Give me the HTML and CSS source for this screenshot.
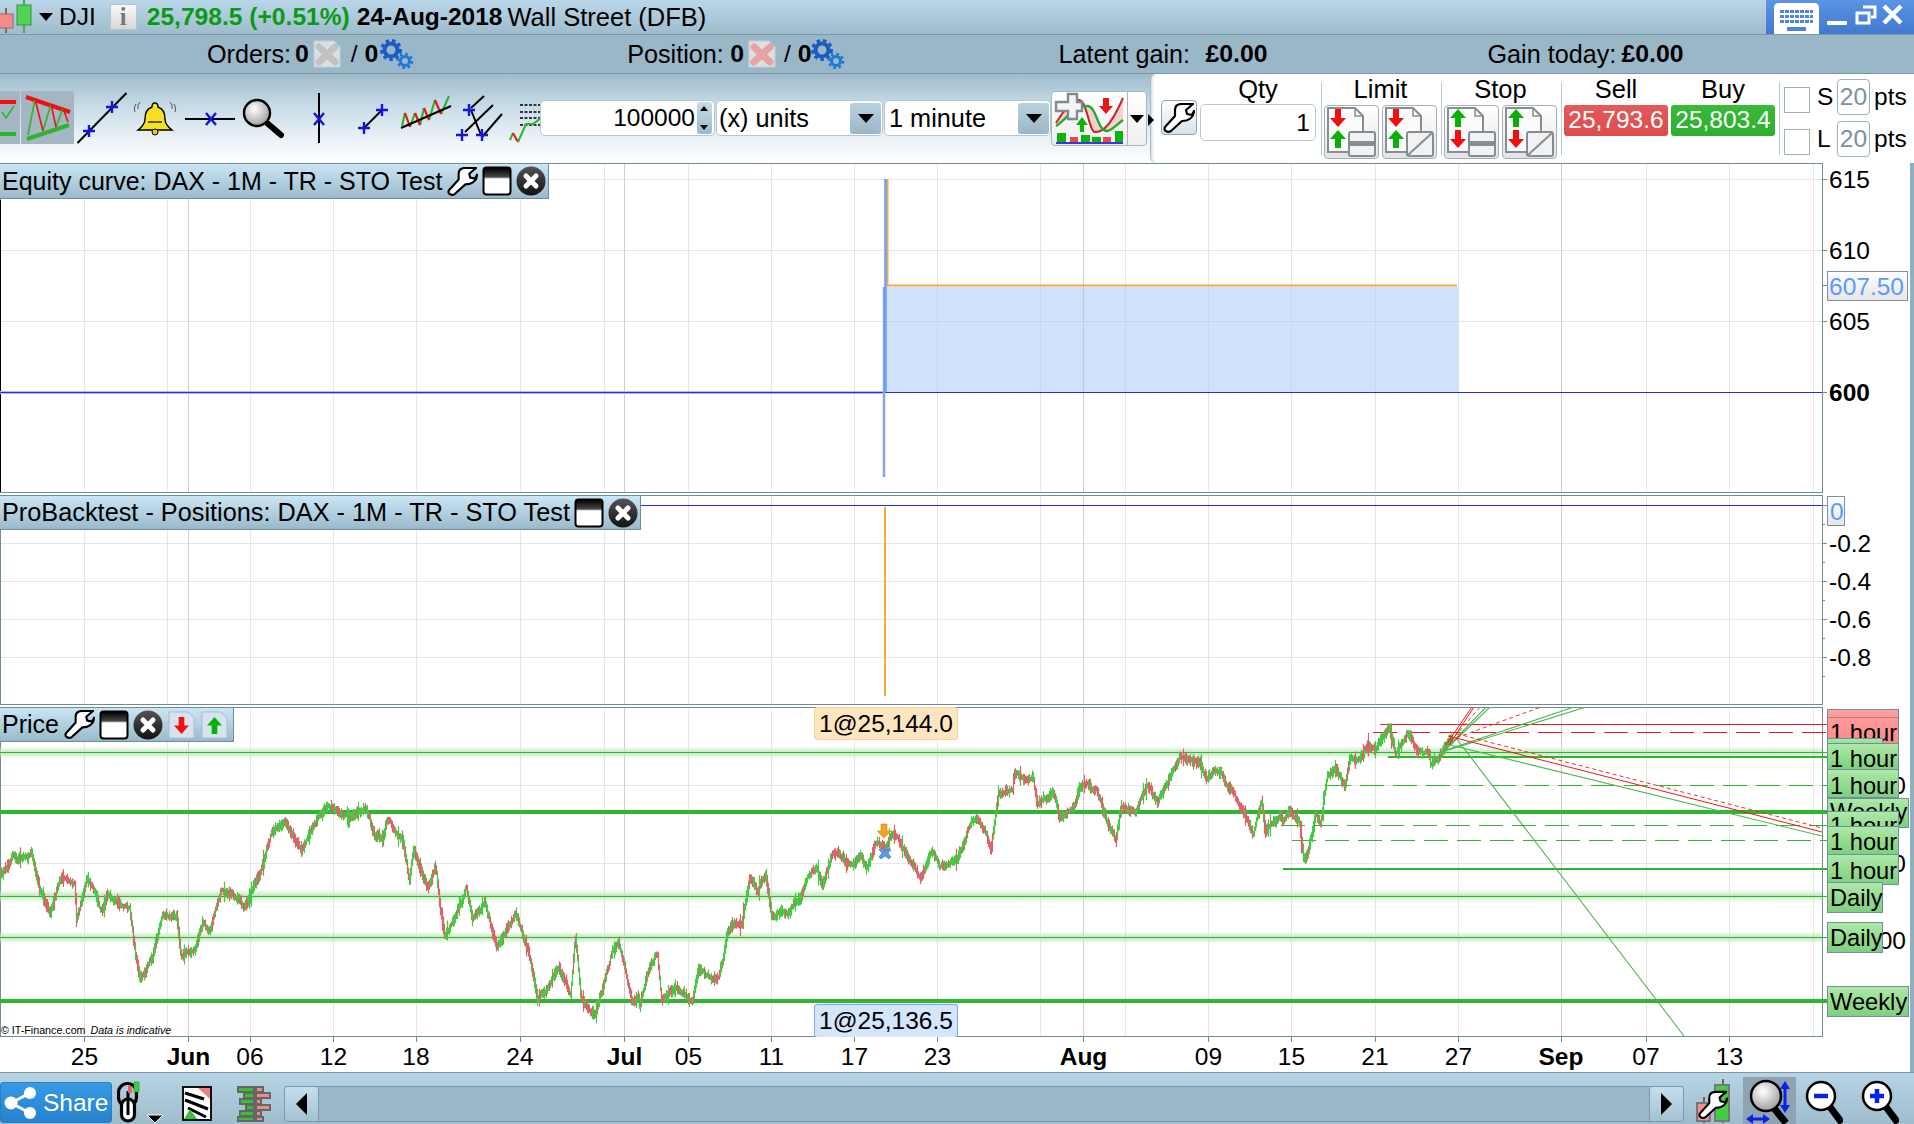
FILE: index.html
```html
<!DOCTYPE html>
<html lang="en">
<head>
<meta charset="utf-8">
<title>ProRealTime - DJI</title>
<link rel="stylesheet" href="styles.css">
</head>
<body>
<svg class="defs" width="0" height="0" aria-hidden="true">
  <defs>
    <linearGradient id="winTop" x1="0" y1="0" x2="0" y2="1"><stop offset="0" stop-color="#000"/><stop offset="0.35" stop-color="#444"/><stop offset="0.42" stop-color="#fff"/></linearGradient>
    <radialGradient id="glass" cx="0.4" cy="0.35" r="0.7"><stop offset="0" stop-color="#fff"/><stop offset="1" stop-color="#999"/></radialGradient>
    <linearGradient id="closeGrad" x1="0" y1="0" x2="0" y2="1"><stop offset="0" stop-color="#555"/><stop offset="1" stop-color="#111"/></linearGradient>
    <linearGradient id="tagGreen" x1="0" y1="0" x2="0" y2="1"><stop offset="0" stop-color="#aee9a8"/><stop offset="1" stop-color="#7dcf7d"/></linearGradient>
    <linearGradient id="tagRed" x1="0" y1="0" x2="0" y2="1"><stop offset="0" stop-color="#ffa0a0"/><stop offset="1" stop-color="#fb8a8a"/></linearGradient>
    <linearGradient id="tagGrey" x1="0" y1="0" x2="0" y2="1"><stop offset="0" stop-color="#fff"/><stop offset="1" stop-color="#e6e6e6"/></linearGradient>
    <linearGradient id="glow" x1="0" y1="0" x2="0" y2="1"><stop offset="0" stop-color="#cfeccb" stop-opacity="0"/><stop offset="0.5" stop-color="#bfe6ba"/><stop offset="1" stop-color="#cfeccb" stop-opacity="0"/></linearGradient>
    <symbol id="wrench" viewBox="0 0 32 30"><path d="M2 24 L12 13 L12 7 C12 3 15 1 19 1 L30 1 L23 7 L24 11 L29 12 L31 8 C31 14 26 18 19 18 L8 28 C5 30 0 28 2 24 Z" fill="#fff" stroke="#000" stroke-width="2.2" stroke-linejoin="round"/></symbol>
    <symbol id="window" viewBox="0 0 30 30"><rect x="1.5" y="1.5" width="27" height="27" rx="3" fill="url(#winTop)" stroke="#000" stroke-width="2"/></symbol>
    <symbol id="close" viewBox="0 0 30 30"><circle cx="15" cy="15" r="14.5" fill="url(#closeGrad)"/><path d="M10 10 L20 20 M20 10 L10 20" stroke="#fff" stroke-width="5" stroke-linecap="round"/></symbol>
    <symbol id="gears" viewBox="0 0 34 30"><g fill="none" stroke="#1a5cc4"><circle cx="11" cy="11" r="6.5" stroke-width="4"/><circle cx="11" cy="11" r="9.5" stroke-width="3" stroke-dasharray="3.5 3"/><circle cx="25" cy="22" r="4.5" stroke-width="3" stroke="#1f78d8"/><circle cx="25" cy="22" r="7" stroke-width="2.5" stroke-dasharray="2.8 2.7" stroke="#1f78d8"/></g></symbol>
    <symbol id="xdoc" viewBox="0 0 28 28"><path d="M1 1 H21 L27 7 V27 H1 Z" fill="#d9e0e4" stroke="#c4ced4"/><path d="M6 7 L22 22 M22 7 L6 22" stroke="currentColor" stroke-width="7" stroke-linecap="round"/></symbol>
    <symbol id="arrowDown" viewBox="0 0 16 18"><path d="M5 0 H11 V9 H16 L8 18 L0 9 H5 Z" fill="#f01010"/></symbol>
    <symbol id="arrowUp" viewBox="0 0 16 18"><path d="M8 0 L16 9 H11 V18 H5 V9 H0 Z" fill="#08b008"/></symbol>
    <symbol id="docBase" viewBox="0 0 55 54"><path d="M4 3 H31 L39 11 V47 H4 Z" fill="#fbfbfb" stroke="#868e93" stroke-width="2"/><path d="M31 3 V11 H39" fill="none" stroke="#868e93" stroke-width="1.5"/></symbol>
    <symbol id="blockBar" viewBox="0 0 55 54"><rect x="25" y="27" width="26" height="24" rx="2" fill="#f2f2f2" stroke="#868e93" stroke-width="2"/><rect x="25" y="36" width="26" height="5" fill="#868e93"/></symbol>
    <symbol id="blockDiag" viewBox="0 0 55 54"><rect x="25" y="27" width="26" height="24" rx="2" fill="#f2f2f2" stroke="#868e93" stroke-width="2"/><path d="M26 50 L50 28" stroke="#868e93" stroke-width="2"/></symbol>
    <symbol id="plusMark" viewBox="-7 -7 14 14"><path d="M-6 0H6M0 -6V6" stroke="#1414e0" stroke-width="2.4"/></symbol>
    <symbol id="crossMark" viewBox="-7 -7 14 14"><path d="M-5 -6L5 6M5 -6L-5 6" stroke="#1414e0" stroke-width="2.4"/></symbol>
  </defs>
</svg>

<div class="app">
  <header class="title-bar">
    <svg class="candle-icon" viewBox="0 0 32 34" width="32" height="34">
      <path d="M24 0V33" stroke="#55a555" stroke-width="2"/>
      <path d="M6 8V33" stroke="#a85a5a" stroke-width="2"/>
      <rect x="-1" y="14" width="14" height="14" fill="#f58b8b" stroke="#8a6a6a"/>
      <rect x="17" y="5" width="14" height="20" fill="#52d252" stroke="#3f8f3f"/>
    </svg>
    <svg class="caret-down" viewBox="0 0 14 8" width="14" height="8"><path d="M0 0H14L7 8Z" fill="#000"/></svg>
    <span class="instrument">DJI</span>
    <span class="info-btn">i</span>
    <span class="last-price">25,798.5 (+0.51%)</span>
    <span class="quote-date">24-Aug-2018</span>
    <span class="market">Wall Street (DFB)</span>
    <div class="win-controls">
      <svg class="kbd" viewBox="0 0 45 31" width="45" height="31">
        <path d="M5 0H40Q45 0 45 5V31H0V5Q0 0 5 0Z" fill="#fff"/>
        <g fill="#4d86d8"><rect x="6" y="7" width="33" height="3"/><rect x="6" y="12" width="33" height="3"/><rect x="6" y="17" width="33" height="3"/><rect x="13" y="24" width="19" height="4"/></g>
        <g fill="#fff"><rect x="10" y="6" width="1" height="15"/><rect x="15" y="6" width="1" height="15"/><rect x="20" y="6" width="1" height="15"/><rect x="25" y="6" width="1" height="15"/><rect x="30" y="6" width="1" height="15"/><rect x="35" y="6" width="1" height="15"/></g>
      </svg>
      <svg class="win-glyphs" viewBox="0 0 80 34" width="80" height="34">
        <rect x="0" y="21" width="20" height="4" rx="1" fill="#fff"/>
        <path d="M33 13H42V23H30V13Z" fill="none" stroke="#fff" stroke-width="3"/>
        <path d="M36 7H48V17H44" fill="none" stroke="#fff" stroke-width="3"/>
        <path d="M57 6L74 23M74 6L57 23" stroke="#fff" stroke-width="4.5"/>
      </svg>
    </div>
  </header>

  <div class="status-bar">
    <div class="stat stat-orders"><span class="lbl lbl-orders">Orders:</span><b>0</b><svg class="xdoc-icon xdoc-grey"><use href="#xdoc"/></svg><span class="slash">/ <b>0</b></span><svg class="gear-icon"><use href="#gears"/></svg></div>
    <div class="stat stat-position"><span class="lbl lbl-position">Position:</span><b>0</b><svg class="xdoc-icon xdoc-red"><use href="#xdoc"/></svg><span class="slash slash-tight">/ <b>0</b></span><svg class="gear-icon gear-tight"><use href="#gears"/></svg></div>
    <div class="stat stat-latent"><span class="lbl lbl-latent">Latent gain:</span><b>£0.00</b></div>
    <div class="stat stat-today"><span class="lbl lbl-today">Gain today:</span><b>£0.00</b></div>
  </div>

  <div class="toolbar">
    <svg class="tools" viewBox="0 74 541 89" width="541" height="89">
      <rect x="0" y="91" width="20" height="53" fill="#a3b6c2"/>
      <rect x="21" y="91" width="53" height="53" fill="#a3b6c2"/>
      <path d="M0 102H16" stroke="#f01010" stroke-width="4"/><path d="M0 134H16" stroke="#2eb52e" stroke-width="4"/>
      <path d="M2 112L6 118L14 106" fill="none" stroke="#2eb52e" stroke-width="1.5"/>
      <path d="M26 97L70 112" stroke="#f01010" stroke-width="4"/><path d="M27 139L69 125" stroke="#2eb52e" stroke-width="4"/>
      <path d="M28 135L35 99M43 131L51 104M56 127L63 108" stroke="#2eb52e" stroke-width="1.6"/>
      <path d="M35 99L43 131M51 104L56 127M63 108L68 122" stroke="#f01010" stroke-width="1.6"/>
      <path d="M77.5 143L126.5 93" stroke="#000" stroke-width="2"/>
      <use href="#plusMark" x="82" y="124" width="14" height="14"/><use href="#plusMark" x="105" y="100" width="14" height="14"/>
      <path d="M155 103c-2 0-3 2-3 4c-6 2-7 8-7 12c0 5-3 8-7 11h34c-4-3-7-6-7-11c0-4-1-10-7-12c0-2-1-4-3-4z" fill="#f6e020" stroke="#000" stroke-width="1.4"/>
      <circle cx="155" cy="132" r="3" fill="#e8c810" stroke="#000"/><path d="M148 122H162" stroke="#000" stroke-width="1.2"/>
      <path d="M136 104q-3 4-1 8M140 102q-3 3-2 7M174 104q3 4 1 8M170 102q3 3 2 7" fill="none" stroke="#555" stroke-width="1"/>
      <path d="M185 119H235" stroke="#000" stroke-width="2"/><use href="#crossMark" x="204" y="112" width="14" height="14"/>
      <path d="M267 123L281 135" stroke="#000" stroke-width="6" stroke-linecap="round"/>
      <circle cx="257" cy="113" r="13" fill="url(#glass)" stroke="#000" stroke-width="2.4"/>
      <path d="M319 93V143" stroke="#000" stroke-width="2"/><use href="#crossMark" x="312" y="112" width="14" height="14"/>
      <path d="M364 128L382 110" stroke="#000" stroke-width="2"/>
      <use href="#plusMark" x="357" y="121" width="14" height="14"/><use href="#plusMark" x="375" y="103" width="14" height="14"/>
      <path d="M402 126L405 113M410 127L415 113M420 125L424 108M429 120L435 100M441 114L449 96" stroke="#2eb52e" stroke-width="2.2"/>
      <path d="M405 113L410 127M415 113L420 125M424 108L429 120M435 100L441 114" stroke="#f01010" stroke-width="2.2"/>
      <path d="M401 128L451 106" stroke="#000" stroke-width="2"/>
      <path d="M471 108L484 96M465 132L493 105M482 137L502 114M471 110L481 135" stroke="#000" stroke-width="2"/>
      <use href="#plusMark" x="462" y="103" width="14" height="14"/><use href="#plusMark" x="455" y="128" width="14" height="14"/><use href="#plusMark" x="475" y="128" width="14" height="14"/>
      <path d="M520 105H541M520 112H541M520 118H541M520 125H541" stroke="#000" stroke-width="1.6" stroke-dasharray="3 1.5"/>
      <path d="M510 140L513 133" stroke="#2eb52e" stroke-width="2"/><path d="M513 133L518 142" stroke="#f01010" stroke-width="2"/><path d="M518 142L526 124L533 124L541 118" fill="none" stroke="#2eb52e" stroke-width="2"/>
    </svg>
    <div class="num-input"><span class="num-value">100000</span><span class="spinner"><svg viewBox="0 0 14 32" width="14" height="32"><path d="M3 9H11L7 4ZM3 23H11L7 28Z" fill="#000"/></svg></span></div>
    <div class="select select-units"><span class="select-text">(x) units</span><span class="select-arrow"><svg viewBox="0 0 16 9" width="16" height="9"><path d="M0 0H16L8 9Z" fill="#000"/></svg></span></div>
    <div class="select select-period"><span class="select-text">1 minute</span><span class="select-arrow"><svg viewBox="0 0 16 9" width="16" height="9"><path d="M0 0H16L8 9Z" fill="#000"/></svg></span></div>
    <div class="indicator-btn">
      <svg viewBox="0 0 74 55" width="74" height="55">
        <path d="M3 31C10 20 18 8 26 8C34 8 36 40 42 40C48 40 56 38 70 6V28C62 34 58 39 54 39C44 39 44 14 34 14C22 14 12 28 3 34Z" fill="#f7cfcf"/>
        <path d="M3 31C10 20 18 8 26 8C34 8 36 40 42 40C48 40 56 38 70 6" fill="none" stroke="#c02828" stroke-width="2"/>
        <path d="M3 34C12 28 22 14 34 14C44 14 44 39 54 39C58 39 62 34 70 28" fill="none" stroke="#1fae2a" stroke-width="2.4"/>
        <path d="M10 10H15V2H24V10H29V19H24V27H15V19H3V10Z" fill="#f4f4f4" stroke="#808a90" stroke-width="2.4"/>
        <path d="M29 25L35 33H31V40H27V33H23Z" fill="#0cb30c"/>
        <path d="M50 6H56V14H60L53 22L46 14H50Z" fill="#ee1414"/>
        <g fill="#0cb30c"><rect x="4" y="41" width="9" height="9"/><rect x="28" y="43" width="9" height="7"/><rect x="39" y="45" width="9" height="5"/><rect x="62" y="39" width="8" height="11"/></g>
        <g fill="#e84a4a"><rect x="17" y="45" width="8" height="5"/><rect x="50" y="45" width="8" height="5"/></g>
        <rect x="3" y="50" width="67" height="2" fill="#3838e0"/>
      </svg>
      <span class="indicator-caret"><svg viewBox="0 0 14 8" width="14" height="8"><path d="M0 0H14L7 8Z" fill="#000"/></svg></span>
    </div>
    <svg class="panel-toggle" viewBox="0 0 6 12" width="6" height="12"><path d="M0 0L6 6L0 12Z" fill="#000"/></svg>
    <div class="trade-panel">
      <button class="icon-btn wrench-btn" type="button"><svg width="32" height="30"><use href="#wrench"/></svg></button>
      <div class="col col-qty"><div class="col-label">Qty</div><div class="qty-input">1</div></div>
      <div class="sep"></div>
      <div class="col col-orders">
        <div class="col-label">Limit</div>
        <div class="btn-pair">
          <button class="order-btn" type="button"><svg viewBox="0 0 55 54" width="55" height="54"><use href="#docBase"/><use href="#blockBar"/><use href="#arrowDown" x="6" y="4" width="16" height="18"/><use href="#arrowUp" x="6" y="25" width="16" height="18"/></svg></button>
          <button class="order-btn" type="button"><svg viewBox="0 0 55 54" width="55" height="54"><use href="#docBase"/><use href="#blockDiag"/><use href="#arrowDown" x="6" y="4" width="16" height="18"/><use href="#arrowUp" x="6" y="25" width="16" height="18"/></svg></button>
        </div>
      </div>
      <div class="sep"></div>
      <div class="col col-orders">
        <div class="col-label">Stop</div>
        <div class="btn-pair">
          <button class="order-btn" type="button"><svg viewBox="0 0 55 54" width="55" height="54"><use href="#docBase"/><use href="#blockBar"/><use href="#arrowUp" x="6" y="4" width="16" height="18"/><use href="#arrowDown" x="6" y="25" width="16" height="18"/></svg></button>
          <button class="order-btn" type="button"><svg viewBox="0 0 55 54" width="55" height="54"><use href="#docBase"/><use href="#blockDiag"/><use href="#arrowUp" x="6" y="4" width="16" height="18"/><use href="#arrowDown" x="6" y="25" width="16" height="18"/></svg></button>
        </div>
      </div>
      <div class="sep"></div>
      <div class="col col-price"><div class="col-label">Sell</div><div class="price-box price-sell">25,793.6</div></div>
      <div class="col col-price col-buy"><div class="col-label">Buy</div><div class="price-box price-buy">25,803.4</div></div>
      <div class="sep sep-last"></div>
      <div class="risk">
        <div class="risk-row"><span class="check"></span><span class="risk-key">S</span><span class="pts-box">20</span><span class="pts">pts</span></div>
        <div class="risk-row"><span class="check"></span><span class="risk-key">L</span><span class="pts-box">20</span><span class="pts">pts</span></div>
      </div>
    </div>
  </div>

  <main class="charts">
    <section class="panel panel-equity">
      <svg class="plot" viewBox="0 163 1910 330" width="1910" height="330">
        <rect class="plot-frame" x="0.5" y="163.5" width="1822" height="329"/>
        <g id="grid-equity"></g>
        <path class="frame-left" d="M0.5 200V492"/>
        <rect class="equity-fill" x="884.5" y="287" width="574" height="105"/>
        <path class="base-soft" d="M0 392.5H884"/>
        <path class="base-line" d="M0 392.5H1822"/>
        <path class="equity-line" d="M887.5 179V285.5H1457"/>
        <path class="spike-soft" d="M884 287V477"/>
        <path class="spike" d="M885.5 179V392"/>
        <path class="spike-orange" d="M884 392V470"/>
        <path class="tick" d="M1822 179.5H1827M1822 250.5H1827M1822 285.5H1827M1822 321.5H1827M1822 392.5H1827"/>
        <text class="ax" x="1829" y="188">615</text>
        <text class="ax" x="1829" y="259">610</text>
        <rect class="value-tag" x="1827.5" y="271.5" width="80" height="29"/>
        <text class="ax ax-blue" x="1829" y="294.5">607.50</text>
        <text class="ax" x="1829" y="330">605</text>
        <text class="ax ax-bold" x="1829" y="401">600</text>
      </svg>
      <div class="legend legend-equity">
        <span class="legend-title">Equity curve: DAX - 1M - TR - STO Test</span>
        <svg class="lg-wrench"><use href="#wrench"/></svg>
        <svg class="lg-btn"><use href="#window"/></svg>
        <svg class="lg-btn"><use href="#close"/></svg>
      </div>
    </section>

    <section class="panel panel-positions">
      <svg class="plot" viewBox="0 495 1910 210" width="1910" height="210">
        <rect class="plot-frame" x="0.5" y="495.5" width="1822" height="209"/>
        <g id="grid-positions"></g>
        <path class="base-line" d="M640 505.5H1822"/>
        <path class="position-line" d="M885 507V696"/>
        <path class="tick" d="M1822 505.5H1827M1822 543.5H1827M1822 581.5H1827M1822 619.5H1827M1822 657.5H1827M1822 524.5H1825M1822 562.5H1825M1822 600.5H1825M1822 638.5H1825M1822 676.5H1825"/>
        <rect class="value-tag" x="1827.5" y="496.5" width="17" height="29"/>
        <text class="ax ax-blue" x="1830" y="520">0</text>
        <text class="ax" x="1829" y="552">-0.2</text>
        <text class="ax" x="1829" y="590">-0.4</text>
        <text class="ax" x="1829" y="628">-0.6</text>
        <text class="ax" x="1829" y="666">-0.8</text>
      </svg>
      <div class="legend legend-positions">
        <span class="legend-title">ProBacktest - Positions: DAX - 1M - TR - STO Test</span>
        <svg class="lg-btn"><use href="#window"/></svg>
        <svg class="lg-btn"><use href="#close"/></svg>
      </div>
    </section>

    <section class="panel panel-price">
      <svg class="plot" viewBox="0 707 1910 330" width="1910" height="330">
        <rect class="plot-frame" x="0.5" y="707.5" width="1822" height="329"/>
        <g id="grid-price"></g>
        <text class="ax" x="1831" y="794">25,500</text>
        <text class="ax" x="1831" y="872">25,000</text>
        <text class="ax" x="1831" y="949">24,500</text>
        <g class="glows">
          <rect x="0" y="746" width="1822" height="13"/><rect x="0" y="889" width="1822" height="14"/><rect x="0" y="931" width="1822" height="13"/>
        </g>
        <path class="lv-thin" d="M0 752.5H1827M0 896.5H1827M0 937.5H1827"/>
        <path class="lv-thick" d="M0 812H1827M0 1001H1827"/>
        <path class="lv-mid" d="M1388 757H1827M1283 869H1827"/>
        <path class="lv-dash" d="M1327 785.5H1827M1281 825.5H1827M1292 840.5H1827"/>
        <path class="red-solid" d="M1380 724.5H1827"/>
        <path class="red-dash" d="M1373 732.5H1827"/>
        <path id="candles-red" class="candle-red"/>
        <path id="candles-green" class="candle-green"/>
        <path class="trend-g" d="M1456 738L1684 1036M1450 745L1822 836M1442 752L1586 707M1446 750L1574 707M1440 755L1490 707M1438 757L1486 707"/>
        <path class="trend-r" d="M1448 736L1822 832M1446 745L1472 707M1449 745L1474 707"/>
        <path class="trend-rd" d="M1450 732L1822 828M1450 740L1541 707M1450 742L1480 707"/>
        <path class="entry-arrow" d="M881 824H887V831H891L884 838L877 831H881Z"/>
        <path class="exit-x" d="M881 848L885 851L889 848L891 850L888 853L891 857L889 859L885 856L881 859L879 857L882 853L879 850Z"/>
        <g class="tags">
          <g class="tag tag-red"><rect x="1827.5" y="709.5" width="71" height="34"/><path d="M1828 717.5H1898"/><text x="1830" y="741">1 hour</text></g>
          <g class="tag"><rect x="1827.5" y="738.5" width="55" height="10"/></g>
          <g class="tag"><rect x="1827.5" y="743.5" width="71" height="26"/><text x="1830" y="767">1 hour</text></g>
          <g class="tag"><rect x="1827.5" y="769.5" width="71" height="28"/><text x="1830" y="794">1 hour</text></g>
          <g class="tag"><rect x="1827.5" y="798.5" width="81" height="29"/><text x="1830" y="820">Weekly</text></g>
          <g class="tag"><rect x="1827.5" y="811.5" width="71" height="29"/><text x="1830" y="834">1 hour</text></g>
          <g class="tag"><rect x="1827.5" y="826.5" width="71" height="28"/><text x="1830" y="850">1 hour</text></g>
          <g class="tag"><rect x="1827.5" y="854.5" width="71" height="30"/><text x="1830" y="879">1 hour</text></g>
          <g class="tag"><rect x="1827.5" y="882.5" width="55" height="30"/><text x="1830" y="906">Daily</text></g>
          <g class="tag"><rect x="1827.5" y="922.5" width="55" height="30"/><text x="1830" y="946">Daily</text></g>
          <g class="tag"><rect x="1827.5" y="986.5" width="81" height="30"/><text x="1830" y="1010">Weekly</text></g>
        </g>
      </svg>
      <div class="legend legend-price">
        <span class="legend-title">Price</span>
        <svg class="lg-wrench"><use href="#wrench"/></svg>
        <svg class="lg-btn"><use href="#window"/></svg>
        <svg class="lg-btn"><use href="#close"/></svg>
        <svg class="lg-doc" viewBox="0 0 29 30"><path d="M2 2H21L27 8V28H2Z" fill="#d6e4f0" stroke="#a9bdd0"/><use href="#arrowDown" x="7" y="7" width="15" height="17"/></svg>
        <svg class="lg-doc" viewBox="0 0 29 30"><path d="M2 2H21L27 8V28H2Z" fill="#d6e4f0" stroke="#a9bdd0"/><use href="#arrowUp" x="7" y="7" width="15" height="17"/></svg>
      </div>
      <div class="fill-tag fill-sell">1@25,144.0</div>
      <div class="fill-tag fill-buy">1@25,136.5</div>
      <div class="copyright">© IT-Finance.com <em>Data is indicative</em></div>
    </section>

    <svg class="x-axis" viewBox="0 1037 1910 36" width="1910" height="36">
      <path id="x-ticks" class="tick-x"/>
      <g class="ax-x">
        <text x="84.5" y="1065">25</text><text class="ax-bold" x="188.5" y="1065">Jun</text><text x="250" y="1065">06</text><text x="333.5" y="1065">12</text><text x="416" y="1065">18</text><text x="520" y="1065">24</text><text class="ax-bold" x="624.5" y="1065">Jul</text><text x="688.5" y="1065">05</text><text x="771.5" y="1065">11</text><text x="854.5" y="1065">17</text><text x="937.5" y="1065">23</text><text class="ax-bold" x="1083.5" y="1065">Aug</text><text x="1208.5" y="1065">09</text><text x="1291.5" y="1065">15</text><text x="1375" y="1065">21</text><text x="1458.5" y="1065">27</text><text class="ax-bold" x="1561" y="1065">Sep</text><text x="1646" y="1065">07</text><text x="1729.5" y="1065">13</text>
      </g>
    </svg>
  </main>

  <footer class="bottom-bar">
    <button class="share-btn" type="button">
      <svg viewBox="0 0 34 34" width="34" height="34"><path d="M27 7L8 17L27 27" fill="none" stroke="#fff" stroke-width="3"/><circle cx="27" cy="7" r="6" fill="#fff"/><circle cx="8" cy="17" r="6.5" fill="#fff"/><circle cx="27" cy="27" r="6" fill="#fff"/></svg>
      <span>Share</span>
    </button>
    <svg class="chain-icon" viewBox="0 0 24 44" width="24" height="44">
      <rect x="1.5" y="4.5" width="18" height="23" rx="9" fill="none" stroke="#000" stroke-width="3.2"/>
      <rect x="4.5" y="20" width="13" height="22" rx="6.5" fill="#fff" stroke="#000" stroke-width="3.2"/>
      <path d="M11 12V36" stroke="#000" stroke-width="3"/>
      <rect x="11" y="7" width="4" height="7" fill="#e86060"/><rect x="17" y="3" width="5" height="10" fill="#3ccf3c" stroke="#1a8a1a" stroke-width="0.5"/>
    </svg>
    <svg class="chain-caret" viewBox="0 0 18 10" width="18" height="10"><path d="M1 1H17L9 9Z" fill="#000" stroke="#fff"/></svg>
    <svg class="news-icon" viewBox="0 0 30 35" width="30" height="35">
      <rect x="1" y="1" width="28" height="33" fill="#fff" stroke="#111" stroke-width="2"/>
      <path d="M3 7L22 13M3 14L26 23M6 22L24 31" stroke="#000" stroke-width="3"/>
      <path d="M16 2H28V13Z" fill="#f08080"/><path d="M2 33H15L8 23Z" fill="#3cc03c"/>
    </svg>
    <svg class="bars-icon" viewBox="0 0 35 36" width="35" height="36">
      <g stroke="#666" stroke-width="2">
        <rect x="2" y="1" width="16" height="5" fill="#35c035"/><rect x="20" y="1" width="7" height="5" fill="#f08a8a"/>
        <rect x="8" y="7" width="10" height="5" fill="#35c035"/><rect x="20" y="7" width="14" height="5" fill="#f08a8a"/>
        <rect x="4" y="13" width="14" height="5" fill="#35c035"/><rect x="20" y="13" width="5" height="5" fill="#f08a8a"/>
        <rect x="10" y="19" width="8" height="5" fill="#35c035"/><rect x="20" y="19" width="14" height="5" fill="#f08a8a"/>
        <rect x="4" y="25" width="14" height="5" fill="#35c035"/><rect x="20" y="25" width="5" height="5" fill="#f08a8a"/>
        <rect x="2" y="31" width="16" height="4" fill="#35c035"/><rect x="20" y="31" width="7" height="4" fill="#f08a8a"/>
      </g>
    </svg>
    <div class="scrollbar">
      <button class="scroll-btn" type="button"><svg viewBox="0 0 11 22" width="11" height="22"><path d="M11 0V22L0 11Z" fill="#000"/></svg></button>
      <div class="scroll-track"></div>
      <button class="scroll-btn" type="button"><svg viewBox="0 0 11 22" width="11" height="22"><path d="M0 0V22L11 11Z" fill="#000"/></svg></button>
    </div>
    <svg class="settings-icon" viewBox="0 0 34 44" width="34" height="44">
      <path d="M27 0V44M8 18V44" stroke="#666" stroke-width="2"/>
      <rect x="1" y="24" width="13" height="18" fill="#f28f8f" stroke="#777" stroke-width="2"/>
      <rect x="19" y="6" width="14" height="36" fill="#45cc45" stroke="#777" stroke-width="2"/>
      <use href="#wrench" x="2" y="10" width="30" height="32"/>
    </svg>
    <div class="zoom-selected">
      <svg viewBox="0 0 53 47" width="53" height="47">
        <path d="M30 30L43 46" stroke="#000" stroke-width="7"/>
        <circle cx="23" cy="19" r="15" fill="url(#glass)" stroke="#000" stroke-width="2.5"/>
        <path d="M42 10V30" stroke="#0a22e8" stroke-width="3"/><path d="M37 12L42 4L47 12ZM37 28L42 36L47 28Z" fill="#0a22e8"/>
        <path d="M8 42H22" stroke="#0a22e8" stroke-width="3"/><path d="M10 37L3 42L10 47ZM20 37L27 42L20 47Z" fill="#0a22e8"/>
      </svg>
    </div>
    <svg class="zoom-out" viewBox="0 0 38 47" width="38" height="47">
      <path d="M25 30L37 46" stroke="#000" stroke-width="7"/><circle cx="16" cy="19" r="14" fill="#fff" stroke="#000" stroke-width="2.5"/><path d="M9 19H23" stroke="#0a22e8" stroke-width="4.5"/>
    </svg>
    <svg class="zoom-in" viewBox="0 0 38 47" width="38" height="47">
      <path d="M25 30L37 46" stroke="#000" stroke-width="7"/><circle cx="16" cy="19" r="14" fill="#fff" stroke="#000" stroke-width="2.5"/><path d="M9 19H23M16 12V26" stroke="#0a22e8" stroke-width="4.5"/>
    </svg>
  </footer>
</div>
<script src="chart.js"></script>
</body>
</html>
```

FILE: styles.css
```css
* { box-sizing: border-box; }
html, body { margin: 0; padding: 0; background: #fff; }
body { font-family: "Liberation Sans", Arial, sans-serif; font-size: 24.5px; color: #000; overflow: hidden; }
.defs { position: absolute; }
svg { display: block; flex: none; }
button { font: inherit; padding: 0; margin: 0; }
.app { width: 1914px; height: 1124px; display: flex; flex-direction: column; overflow: hidden; }

/* title row */
.title-bar { height: 35px; flex: none; display: flex; align-items: center; background: linear-gradient(#bad7e9, #9fbccd); border-bottom: 1px solid #7d97a6; }
.caret-down { margin-left: 7px; }
.instrument { margin-left: 6px; }
.info-btn { margin-left: 14px; width: 27px; height: 26px; display: flex; align-items: center; justify-content: center; background: linear-gradient(#fafafa, #d6d6d6); border: 1px solid #b8c6ce; border-radius: 2px; font-family: "Liberation Serif", serif; font-weight: 700; color: #777; }
.last-price { margin-left: 10px; font-weight: 700; color: #0a9a14; font-size: 24.6px; }
.quote-date { margin-left: 7px; font-weight: 700; }
.market { margin-left: 5px; font-size: 25.5px; }
.win-controls { margin-left: auto; width: 148px; height: 34px; background: linear-gradient(#5a94e2, #4279cf); display: flex; align-items: flex-end; padding-left: 8px; gap: 8px; }

/* status row */
.status-bar { height: 39px; flex: none; display: flex; align-items: center; background: #9ab7c8; border-bottom: 1px solid #7d97a6; font-size: 25.2px; }
.stat { display: flex; align-items: center; white-space: pre; }
.stat b { font-size: 24.8px; }
.lbl { display: block; }
.lbl-orders { width: 88px; }
.lbl-position { width: 103px; }
.lbl-latent { width: 147px; }
.lbl-today { width: 134px; }
.stat-orders { margin-left: 207px; }
.stat-position { margin-left: 213px; }
.stat-latent { margin-left: 213px; }
.stat-today { margin-left: 220px; }
.xdoc-icon { width: 28px; height: 28px; margin-left: 4px; }
.xdoc-grey { color: #c2c2c2; }
.xdoc-red { color: #e8a2a2; }
.slash { margin-left: 10px; font-size: 24.5px; }
.slash-tight { margin-left: 8px; }
.gear-icon { width: 34px; height: 30px; margin-left: 2px; }
.gear-tight { margin-left: 0; }

/* toolbar */
.toolbar { height: 89px; flex: none; display: flex; align-items: flex-start; background: linear-gradient(#9fbbcb, #c6dbe7 35%, #e8f0f5 70%, #fff); }
.tools { margin-right: -1px; }
.num-input { width: 175px; height: 36px; margin-top: 26px; display: flex; align-items: center; justify-content: flex-end; background: #fff; border: 1px solid #b8c8d2; border-radius: 5px; padding-right: 2px; }
.num-value { margin-right: 2px; }
.spinner { width: 15px; height: 32px; display: block; background: linear-gradient(#c8dce8, #9db9ca); border-radius: 3px; }
.select { width: 167px; height: 36px; margin-top: 26px; margin-left: 1px; display: flex; align-items: center; justify-content: space-between; background: #fff; border: 1px solid #b8c8d2; border-radius: 5px; padding: 0 1px 0 2px; font-size: 25.3px; }
.select-arrow { width: 31px; height: 31px; display: flex; align-items: center; justify-content: center; background: linear-gradient(#b9d2e1, #9ab7c8); border-radius: 3px; }
.select-period { padding-left: 4px; }
.indicator-btn { width: 96px; height: 55px; margin-top: 17px; display: flex; background: linear-gradient(#fff, #efefef); border: 1px solid #a7b8c3; border-radius: 4px; padding-left: 1px; }
.indicator-caret { flex: 1; display: flex; align-items: center; justify-content: center; border-left: 1px solid #a7b8c3; }
.panel-toggle { margin: 40px -4px 0 1px; position: relative; z-index: 1; }
.trade-panel { flex: 1; height: 89px; display: flex; align-items: flex-start; background: #fff; border-left: 1px solid #a7bcc9; border-radius: 6px 0 0 6px; padding-left: 10px; box-shadow: inset 3px 0 3px -2px #c4d4de; }
.icon-btn { width: 36px; height: 35px; margin-top: 26px; display: flex; align-items: center; justify-content: center; background: linear-gradient(#fff, #d7e3eb); border: 1px solid #8ea3b0; border-radius: 4px; }
.col { display: flex; flex-direction: column; align-items: center; }
.col-label { height: 31px; line-height: 31px; font-size: 25.5px; }
.col-qty { margin-left: 3px; width: 117px; align-items: flex-start; }
.col-qty .col-label { height: 30px; width: 116px; text-align: center; }
.qty-input { width: 116px; height: 37px; line-height: 35px; text-align: right; padding-right: 5px; background: #fff; border: 1px solid #b8c8d2; border-radius: 5px; }
.sep { width: 1px; height: 73px; margin: 8px 2px 0 4px; background: #b6cbd8; }
.btn-pair { display: flex; gap: 3px; }
.col-orders { width: 113px; }
.order-btn { width: 55px; height: 54px; background: linear-gradient(#fff, #e4e4e4); border: 1px solid #9fb0ba; border-radius: 4px; overflow: hidden; }
.order-btn svg { margin: -1px; }
.col-price { width: 104px; }
.col-buy { margin-left: 3px; }
.price-box { width: 104px; height: 31px; line-height: 30px; text-align: center; color: #fff; border-radius: 3px; white-space: nowrap; }
.price-sell { background: linear-gradient(#e45a5a, #dd4c4c); }
.price-buy { background: linear-gradient(#38bb38, #2eae2e); }
.sep-last { margin-right: 4px; }
.risk { padding-top: 5px; display: flex; flex-direction: column; gap: 6px; }
.risk-row { height: 36px; display: flex; align-items: center; }
.check { width: 26px; height: 26px; background: #fff; border: 1px solid #9fb0ba; margin-top: 6px; }
.risk-key { width: 20px; margin-left: 7px; }
.pts-box { width: 33px; height: 36px; line-height: 34px; text-align: center; color: #7a929f; border: 1px solid #9fb0ba; border-radius: 4px; }
.pts { margin-left: 4px; }

/* charts */
.charts { flex: none; width: 1914px; border-right: 4px solid #8fb0c1; background: #fff; }
.panel { position: relative; }
.panel-equity { height: 332px; }
.panel-positions { height: 212px; }
.panel-price { height: 330px; }
.plot-frame { fill: #fff; stroke: #6f8a99; }
.frame-left { stroke: #000; }
.legend { position: absolute; left: 0; top: 0; height: 35px; display: flex; align-items: center; gap: 4px; padding-left: 2px; background: linear-gradient(#cbe6f5, #9abacb); border: 1px solid #6f8a99; border-left: 0; }
.legend-equity { width: 549px; height: 36px; font-size: 25px; }
.legend-positions { width: 641px; font-size: 25.3px; }
.legend-price { width: 234px; font-size: 25px; }
.legend-title { white-space: nowrap; }
.lg-wrench { width: 31px; height: 29px; margin-left: 1px; }
.lg-btn { width: 30px; height: 30px; }
.lg-doc { width: 29px; height: 30px; }

.grid-minor { stroke: #e6e6e6; fill: none; }
.grid-major { stroke: #cfcfcf; fill: none; }
.tick { stroke: #6f8a99; fill: none; }
.ax { font-size: 24.5px; }
.ax-bold { font-weight: 700; }
.ax-blue { fill: #5b9bff; }
.value-tag { fill: url(#tagGrey); stroke: #7a919e; }
.equity-fill { fill: #a9c8fa; fill-opacity: 0.55; }
.base-soft { stroke: #a9c0ef; stroke-width: 3; }
.base-line { stroke: #2a2ae0; stroke-width: 1; }
.spike-soft { stroke: #7fa6ea; stroke-width: 2.5; }
.spike { stroke: #6a9ff5; stroke-width: 2.5; }
.spike-orange { stroke: #e8a860; stroke-width: 0.6; stroke-opacity: 0.7; }
.equity-line { stroke: #f6a93e; stroke-width: 2; fill: none; }
.position-line { stroke: #f6a93e; stroke-width: 2; }

.glows rect { fill: url(#glow); }
.lv-thin { stroke: #2fb52f; stroke-width: 1; fill: none; }
.lv-thick { stroke: #2fb52f; stroke-width: 4; fill: none; }
.lv-mid { stroke: #2fb52f; stroke-width: 2; fill: none; }
.lv-dash { stroke: #2fb52f; stroke-width: 1; stroke-dasharray: 24 9; fill: none; }
.red-solid { stroke: #f01818; stroke-width: 1; }
.red-dash { stroke: #f01818; stroke-width: 1; stroke-dasharray: 24 9; }
.candle-green { stroke: #45c945; stroke-width: 1.2; fill: none; }
.candle-red { stroke: #d9646a; stroke-width: 1.2; fill: none; }
.trend-g { stroke: #52b552; stroke-width: 1.1; fill: none; }
.trend-r { stroke: #f01818; stroke-width: 1; fill: none; }
.trend-rd { stroke: #f03030; stroke-width: 1; stroke-dasharray: 4 3; fill: none; }
.entry-arrow { fill: #f4a020; stroke: #c98a20; stroke-width: 0.6; }
.exit-x { fill: #5b96e8; stroke: #3f7bd0; stroke-width: 0.6; }
.tag rect { fill: url(#tagGreen); stroke: #6f8f9a; }
.tag-red rect { fill: url(#tagRed); }
.tag-red path { stroke: #c07878; }
.tag text { font-size: 23.7px; }

.fill-tag { position: absolute; left: 814px; width: 144px; height: 33px; display: flex; align-items: center; justify-content: center; border-radius: 3px; font-size: 24.5px; white-space: nowrap; }
.fill-sell { top: 0; background: #fde5bf; border: 1px solid #f6d49a; }
.fill-buy { bottom: 0; background: #d4e6fc; border: 1px solid #7aa9ee; border-bottom: 0; }
.copyright { position: absolute; left: 1px; bottom: 1px; font-size: 10.7px; white-space: nowrap; }
.copyright em { margin-left: 2px; }

.tick-x { stroke: #6f8a99; fill: none; }
.ax-x text { font-size: 24.5px; text-anchor: middle; }
.x-axis { height: 36px; }

/* bottom bar */
.bottom-bar { height: 52px; flex: none; display: flex; align-items: flex-start; background: linear-gradient(#b7d4e4, #9fbccd); border-top: 1px solid #7d97a6; margin-top: -1px; }
.share-btn { width: 112px; height: 41px; margin-top: 9px; display: flex; align-items: center; gap: 6px; padding-left: 2px; color: #fff; background: linear-gradient(#379ae3, #2582cf); border: 1px solid #2a7fc4; border-radius: 3px; font-size: 24.5px; }
.chain-icon { margin: 6px 0 0 5px; }
.chain-caret { margin: 41px 0 0 5px; }
.news-icon { margin: 13px 0 0 18px; }
.bars-icon { margin: 13px 0 0 24px; }
.scrollbar { width: 1400px; height: 36px; margin: 13px 0 0 13px; display: flex; background: #9bb8c9; border: 1px solid #7d97a6; border-radius: 3px; }
.scroll-btn { width: 34px; height: 34px; display: flex; align-items: center; justify-content: center; background: linear-gradient(#c5deec, #a4c2d3); border: 0; border-right: 1px solid #7d97a6; border-radius: 3px; }
.scroll-btn:last-child { border-right: 0; border-left: 1px solid #7d97a6; }
.scroll-track { flex: 1; }
.settings-icon { margin: 6px 0 0 12px; }
.zoom-selected { width: 53px; height: 47px; margin: 4px 0 0 13px; background: #8ea4b2; }
.zoom-out { margin: 4px 0 0 9px; }
.zoom-in { margin: 4px 0 0 18px; }
```

FILE: chart.js
```js
(function () {
  var NS = "http://www.w3.org/2000/svg";
  var minorX = [84.5, 167, 250, 333.5, 416, 520, 604.5, 688.5, 771.5, 854.5, 937.5, 1040, 1125.5, 1208.5, 1291.5, 1375, 1458.5, 1646, 1729.5, 1813];
  var majorX = [188.5, 624.5, 1083.5, 1561];

  function vLines(xs, top, bottom) {
    return xs.map(function (x) { return "M" + (Math.floor(x) + 0.5) + " " + top + "V" + bottom; }).join("");
  }
  function hLines(ys, right) {
    return ys.map(function (y) { return "M1 " + (y + 0.5) + "H" + right; }).join("");
  }
  function addGrid(id, top, bottom, ys) {
    var g = document.getElementById(id);
    var minor = document.createElementNS(NS, "path");
    minor.setAttribute("class", "grid-minor");
    minor.setAttribute("d", vLines(minorX, top, bottom) + hLines(ys, 1822));
    var major = document.createElementNS(NS, "path");
    major.setAttribute("class", "grid-major");
    major.setAttribute("d", vLines(majorX, top, bottom));
    g.appendChild(minor);
    g.appendChild(major);
  }
  addGrid("grid-equity", 164, 492, [179, 250, 321]);
  addGrid("grid-positions", 496, 704, [543, 581, 619, 657]);
  addGrid("grid-price", 708, 1036, [785, 863]);
  document.getElementById("x-ticks").setAttribute("d", vLines(minorX.concat(majorX).filter(function (x) {
    return [167, 604.5, 1040, 1125.5, 1813].indexOf(x) < 0;
  }), 1037, 1042));

  /* price path: key points read from the chart */
  var a = [[0,535],[20,510],[35,460],[45,490],[80,460],[95,530],[100,575],[125,650],[150,550],[185,560],[190,660],[215,540],[235,580],[250,630],[265,570],[290,610],[320,610],[330,710],[345,830],[375,760],[400,630],[435,640],[445,770],[480,740],[500,650],[515,680],[545,565],[590,590],[600,620],[640,520],[650,480],[665,420],[700,345],[740,440],[790,330],[805,310],[860,350],[900,330],[920,400],[940,420],[950,350],[990,410],[1005,530],[1015,430],[1035,510],[1052,560],[1070,490],[1080,600],[1092,690],[1135,610],[1145,565],[1160,660],[1190,610],[1220,760],[1265,655],[1290,740],[1310,830],[1320,900],[1370,790],[1400,880],[1412,700],[1425,880],[1460,950],[1500,770],[1518,730],[1550,900],[1568,870]];
  var b = [[0,910],[20,810],[45,750],[55,885],[90,845],[130,890],[145,790],[195,835],[215,720],[230,680],[250,690],[270,550],[290,580],[310,520],[325,650],[370,630],[395,580],[410,525],[435,490],[450,540],[475,445],[510,490],[545,455],[558,490],[580,410],[605,430],[615,390],[635,400],[660,460],[690,520],[715,440],[737,490],[780,460],[815,360],[850,385],[862,435],[880,270],[915,270],[920,215],[965,225],[975,310],[1015,260],[1030,345],[1065,340],[1080,255],[1120,270],[1140,340],[1168,430],[1180,330],[1215,340],[1245,250],[1270,305],[1310,215],[1325,170],[1370,195],[1390,245],[1425,215],[1445,265],[1475,330],[1505,405],[1525,320],[1535,410],[1568,360]];
  var c = [[0,350],[12,385],[30,345],[60,370],[75,500],[85,480],[100,410],[110,345],[125,365],[135,280],[145,210],[170,190],[197,245],[215,155],[240,170],[265,120],[290,135],[330,75],[350,160],[385,100],[415,155],[450,165],[455,200],[480,165],[520,105]];
  var pts = [];
  a.forEach(function (p) { pts.push([p[0] / 2.45, 700 + p[1] / 3]); });
  b.forEach(function (p) { pts.push([640 + p[0] / 2.45, 700 + p[1] / 3]); });
  c.forEach(function (p) { pts.push([1280 + p[0] / 3, 700 + p[1] / 3]); });

  var seed = 12345;
  function rnd() { seed = (seed * 16807) % 2147483647; return seed / 2147483647; }
  function yAt(x) {
    for (var i = 0; i < pts.length - 1; i++) {
      if (x >= pts[i][0] && x <= pts[i + 1][0] && pts[i + 1][0] > pts[i][0]) {
        var t = (x - pts[i][0]) / (pts[i + 1][0] - pts[i][0]);
        return { y: pts[i][1] + t * (pts[i + 1][1] - pts[i][1]), slope: pts[i + 1][1] - pts[i][1] };
      }
    }
    return { y: pts[pts.length - 1][1], slope: 0 };
  }
  var green = "", red = "";
  var drift = 0;
  for (var x = 0.5; x < 1453; x += 1.0) {
    var s = yAt(x);
    var next = yAt(x + 1);
    drift = Math.max(-6, Math.min(6, drift + (rnd() - 0.5) * 4));
    var h = 4 + rnd() * 8;
    if (rnd() > 0.94) { h += 6 + rnd() * 6; }
    var top = Math.min(s.y, next.y) + drift - h * 0.5;
    var bottom = Math.max(s.y, next.y) + drift + h * 0.5;
    var seg = "M" + x.toFixed(1) + " " + top.toFixed(1) + "V" + bottom.toFixed(1);
    var up = s.slope < 0 ? rnd() < 0.68 : rnd() < 0.38;
    if (up) { green += seg; } else { red += seg; }
  }
  document.getElementById("candles-green").setAttribute("d", green);
  document.getElementById("candles-red").setAttribute("d", red);
})();
```
